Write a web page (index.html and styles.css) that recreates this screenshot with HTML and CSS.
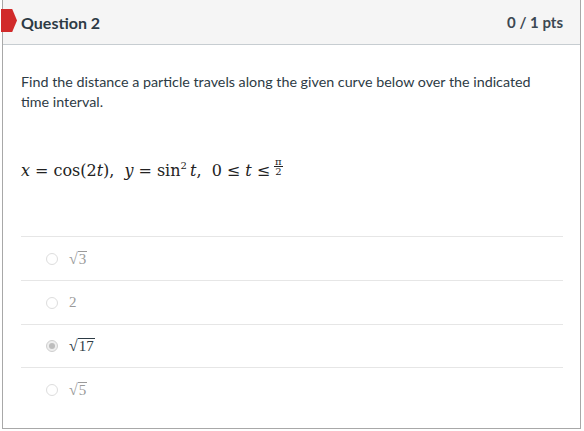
FILE: index.html
```html
<!DOCTYPE html>
<html>
<head>
<meta charset="utf-8">
<link rel="stylesheet" href="styles.css">
</head>
<body>
<div class="question">
  <div class="marker"></div>
  <div class="header">
    <span class="title">Question 2</span>
    <span class="pts">0 / 1 pts</span>
  </div>
  <div class="content">
    <p class="text">Find the distance a particle travels along the given curve below over the indicated time interval.</p>
    <p class="math"><i>x</i><span class="rel">=</span>cos(2<i>t</i>),<span class="sp"></span><i>y</i><span class="rel">=</span>sin<sup>2</sup>&#8201;<i>t</i>,<span class="sp"></span>0<span class="rel">≤</span><i>t</i><span class="rel">≤</span><span class="frac"><span class="num">π</span><span class="den">2</span></span></p>
    <div class="answers">
      <div class="answer faded"><span class="radio"></span><span class="val"><span class="sq">√</span><span class="rad">3</span></span></div>
      <div class="answer faded"><span class="radio"></span><span class="val">2</span></div>
      <div class="answer selected"><span class="radio"><span class="dot"></span></span><span class="val"><span class="sq">√</span><span class="rad">17</span></span></div>
      <div class="answer faded"><span class="radio"></span><span class="val"><span class="sq">√</span><span class="rad">5</span></span></div>
    </div>
  </div>
</div>
</body>
</html>
```
FILE: styles.css
```css
html, body { margin: 0; padding: 0; background: #fff; }
body { font-family: Lato, "Noto Sans", sans-serif; color: #2d3b45; }
.question {
  position: relative;
  margin-left: 2px;
  width: 577px;
  height: 428px;
  border: 1px solid #a8a8a8;
  border-top: none;
}
.marker {
  position: absolute;
  left: -2px; top: 9px;
  width: 16px; height: 23px;
  background: #d12a2a;
  clip-path: polygon(0 0, 70% 0, 100% 50%, 70% 100%, 0 100%);
}
.header {
  height: 44px;
  background: #f5f5f5;
  border-bottom: 1px solid #c7cdd1;
  display: flex;
  align-items: center;
  justify-content: space-between;
  padding: 0 17px 0 18px;
}
.title { font-weight: 700; font-size: 16px; }
.pts { font-weight: 700; font-size: 15px; color: #3c4852; }
.content { padding: 0 17px 0 18px; }
.text { margin: 27px 0 0; font-size: 14.3px; line-height: 20px; max-width: 530px; }
.math {
  margin: 45px 0 0;
  height: 20px;
  font-family: "DejaVu Serif", "Liberation Serif", serif;
  font-size: 16px;
  line-height: 20px;
  color: #222;
  white-space: nowrap;
}
.math i { font-style: italic; }
.rel { display: inline-block; margin: 0 5px; }
.sp { display: inline-block; width: 10px; }
.math sup { font-size: 10px; vertical-align: 7px; line-height: 0; }
.frac {
  display: inline-block;
  vertical-align: 1px;
  font-size: 10px;
  line-height: 9px;
  text-align: center;
  margin-left: -1px;
}
.num { display: block; border-bottom: 1px solid #222; padding: 0 1px; }
.den { display: block; }
.answers { margin-top: 59px; }
.answer {
  height: 43px;
  border-top: 1px solid #e6e6e6;
  display: flex;
  align-items: center;
  font-family: "Liberation Serif", "DejaVu Serif", serif;
  font-size: 15px;
}
.answer:nth-child(3) { height: 42px; }
.radio {
  width: 10px; height: 10px;
  border: 1px solid #ddd;
  border-radius: 50%;
  margin-left: 25px;
  margin-right: 11px;
  display: inline-flex;
  align-items: center;
  justify-content: center;
  box-sizing: content-box;
}
.selected .radio { border-color: #cfcfcf; background: #eee; }
.dot { width: 6px; height: 6px; border-radius: 50%; background: #bdbdbd; }
.faded .val { color: #9a9a9a; }
.selected .val { color: #2d3b45; }
.val { display: inline-flex; align-items: flex-end; }
.sq { font-size: 16px; line-height: 16px; }
.rad { border-top: 1px solid currentColor; line-height: 15px; padding: 0 1px; }
```
